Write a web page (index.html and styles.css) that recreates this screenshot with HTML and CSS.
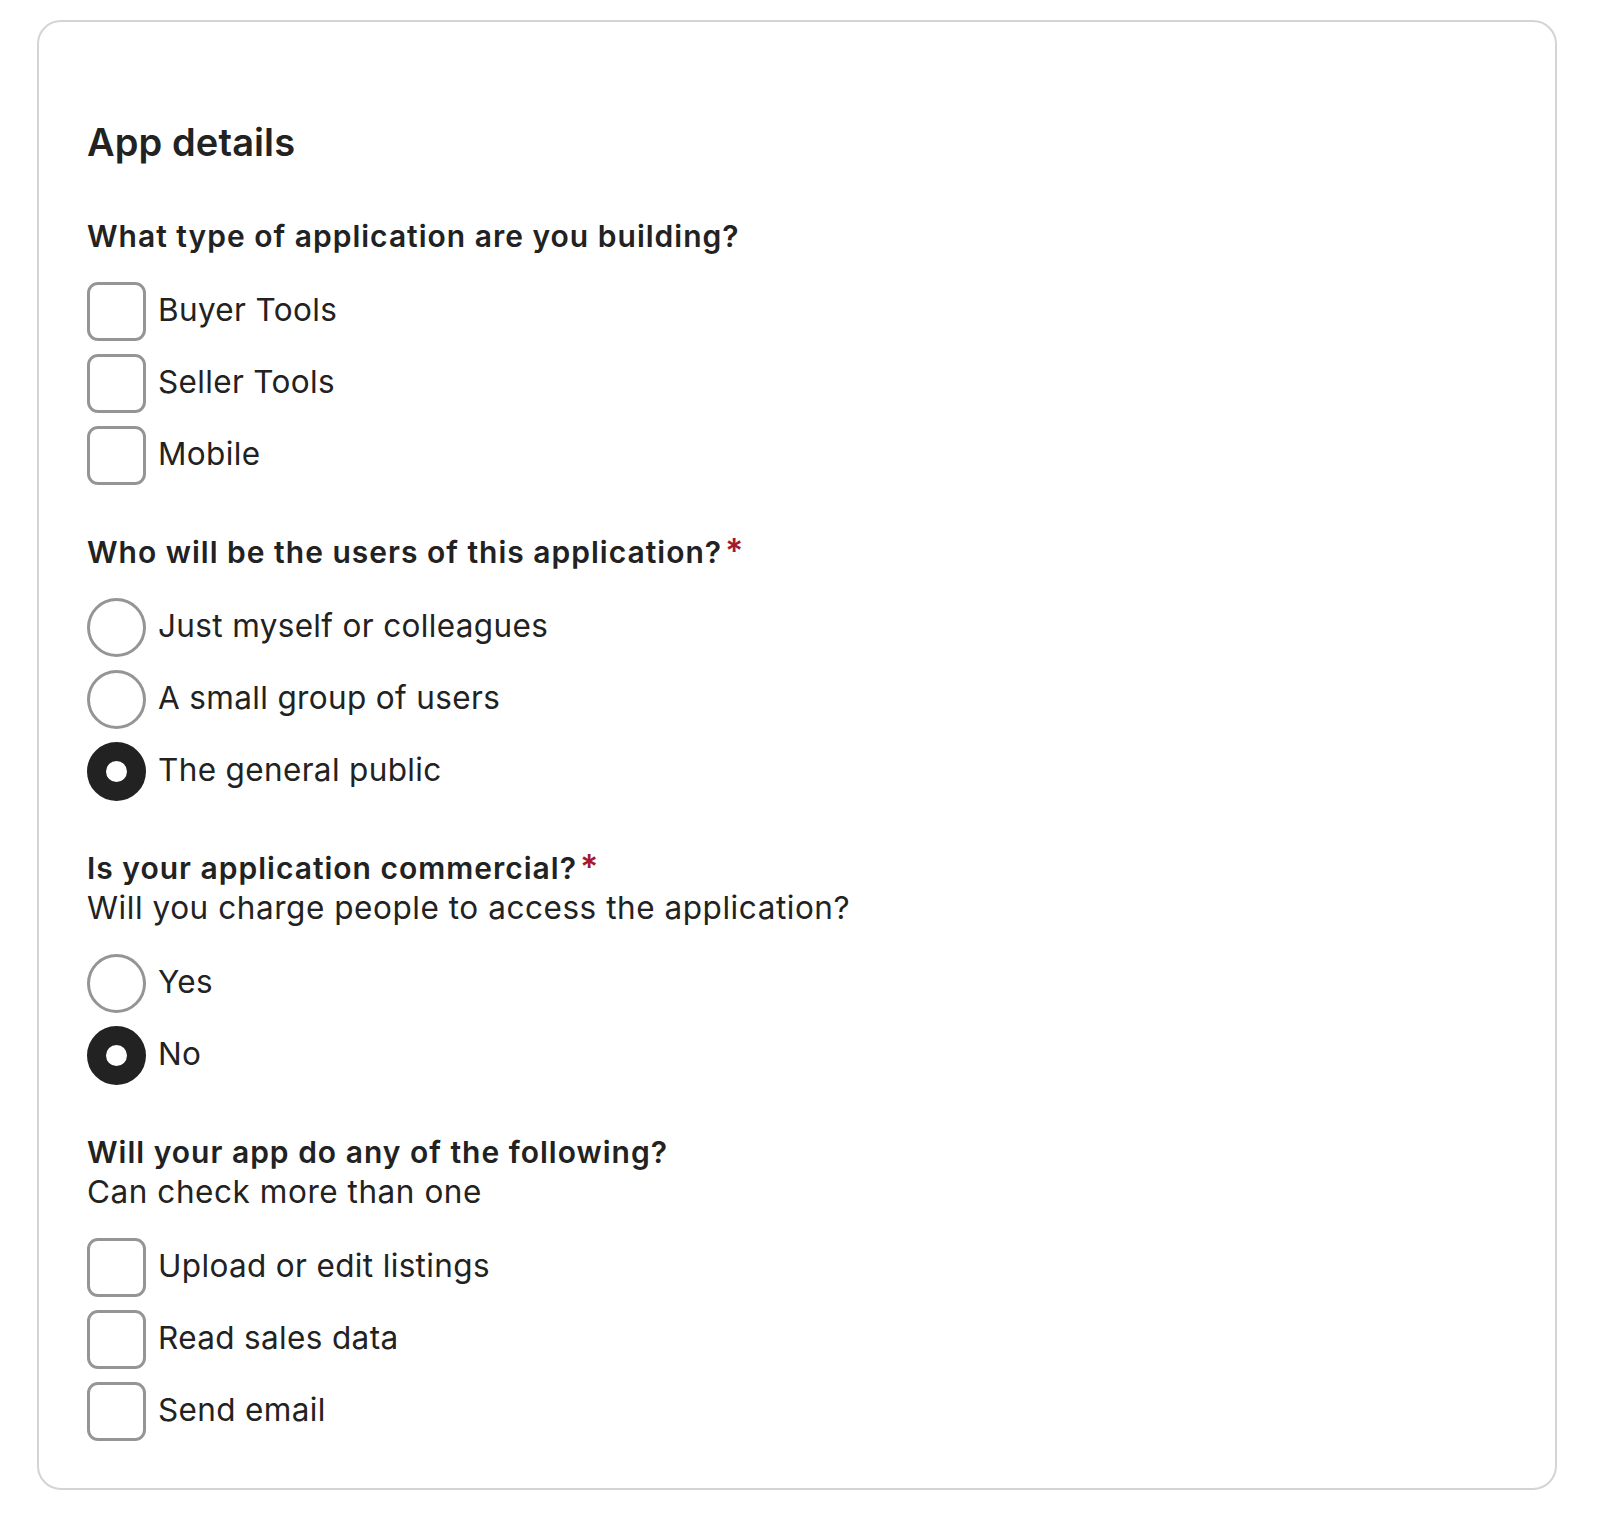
FILE: index.html
```html
<!DOCTYPE html>
<html lang="en">
<head>
<meta charset="utf-8">
<title>App details</title>
<link rel="stylesheet" href="styles.css">
</head>
<body>
<div class="page">
  <section class="card">
    <h2 class="title">App details</h2>

    <div class="group first">
      <p class="q">What type of application are you building?</p>
      <div class="options">
        <label class="opt"><span class="box"></span><span class="txt">Buyer Tools</span></label>
        <label class="opt"><span class="box"></span><span class="txt">Seller Tools</span></label>
        <label class="opt"><span class="box"></span><span class="txt">Mobile</span></label>
      </div>
    </div>

    <div class="group">
      <p class="q">Who will be the users of this application?<span class="req">*</span></p>
      <div class="options">
        <label class="opt"><span class="box radio"></span><span class="txt">Just myself or colleagues</span></label>
        <label class="opt"><span class="box radio"></span><span class="txt">A small group of users</span></label>
        <label class="opt"><span class="box radio on"></span><span class="txt">The general public</span></label>
      </div>
    </div>

    <div class="group">
      <p class="q">Is your application commercial?<span class="req">*</span></p>
      <p class="hint">Will you charge people to access the application?</p>
      <div class="options">
        <label class="opt"><span class="box radio"></span><span class="txt">Yes</span></label>
        <label class="opt"><span class="box radio on"></span><span class="txt">No</span></label>
      </div>
    </div>

    <div class="group">
      <p class="q">Will your app do any of the following?</p>
      <p class="hint">Can check more than one</p>
      <div class="options">
        <label class="opt"><span class="box"></span><span class="txt">Upload or edit listings</span></label>
        <label class="opt"><span class="box"></span><span class="txt">Read sales data</span></label>
        <label class="opt"><span class="box"></span><span class="txt">Send email</span></label>
      </div>
    </div>
  </section>
</div>
</body>
</html>
```

FILE: styles.css
```css
html, body {
  margin: 0;
  padding: 0;
  background: #ffffff;
}

body {
  font-family: Inter, "Liberation Sans", sans-serif;
  color: #222222;
}

.page {
  padding: 20px 45px 25px 37px;
}

.card {
  border: 2px solid #d4d4d4;
  border-radius: 24px;
  padding: 98px 48px 47px;
}

.title {
  margin: 0;
  font-size: 38px;
  line-height: 44px;
  font-weight: 600;
  letter-spacing: 0.1px;
}

.group {
  margin-top: 47px;
}

.group.first {
  margin-top: 52px;
}

.q {
  margin: 0;
  font-size: 30px;
  line-height: 40px;
  font-weight: 600;
  letter-spacing: 1px;
}

.req {
  color: #a61a2e;
  margin-left: 3px;
  font-size: 34px;
  line-height: 30px;
  letter-spacing: 0;
}

.hint {
  margin: 0;
  font-size: 31.5px;
  line-height: 40px;
  font-weight: 400;
  letter-spacing: 0.55px;
}

.options {
  margin-top: 26px;
  display: flex;
  flex-direction: column;
  gap: 13px;
}

.opt {
  display: flex;
  align-items: center;
  gap: 12px;
  height: 59px;
  font-size: 31.5px;
  line-height: 40px;
  letter-spacing: 0.35px;
}

.txt {
  padding-bottom: 4px;
}

.box {
  flex: none;
  width: 59px;
  height: 59px;
  box-sizing: border-box;
  border: 3px solid #959595;
  border-radius: 11px;
  background: #ffffff;
}

.box.radio {
  border-radius: 50%;
}

.box.radio.on {
  border: 19px solid #222222;
}
```
